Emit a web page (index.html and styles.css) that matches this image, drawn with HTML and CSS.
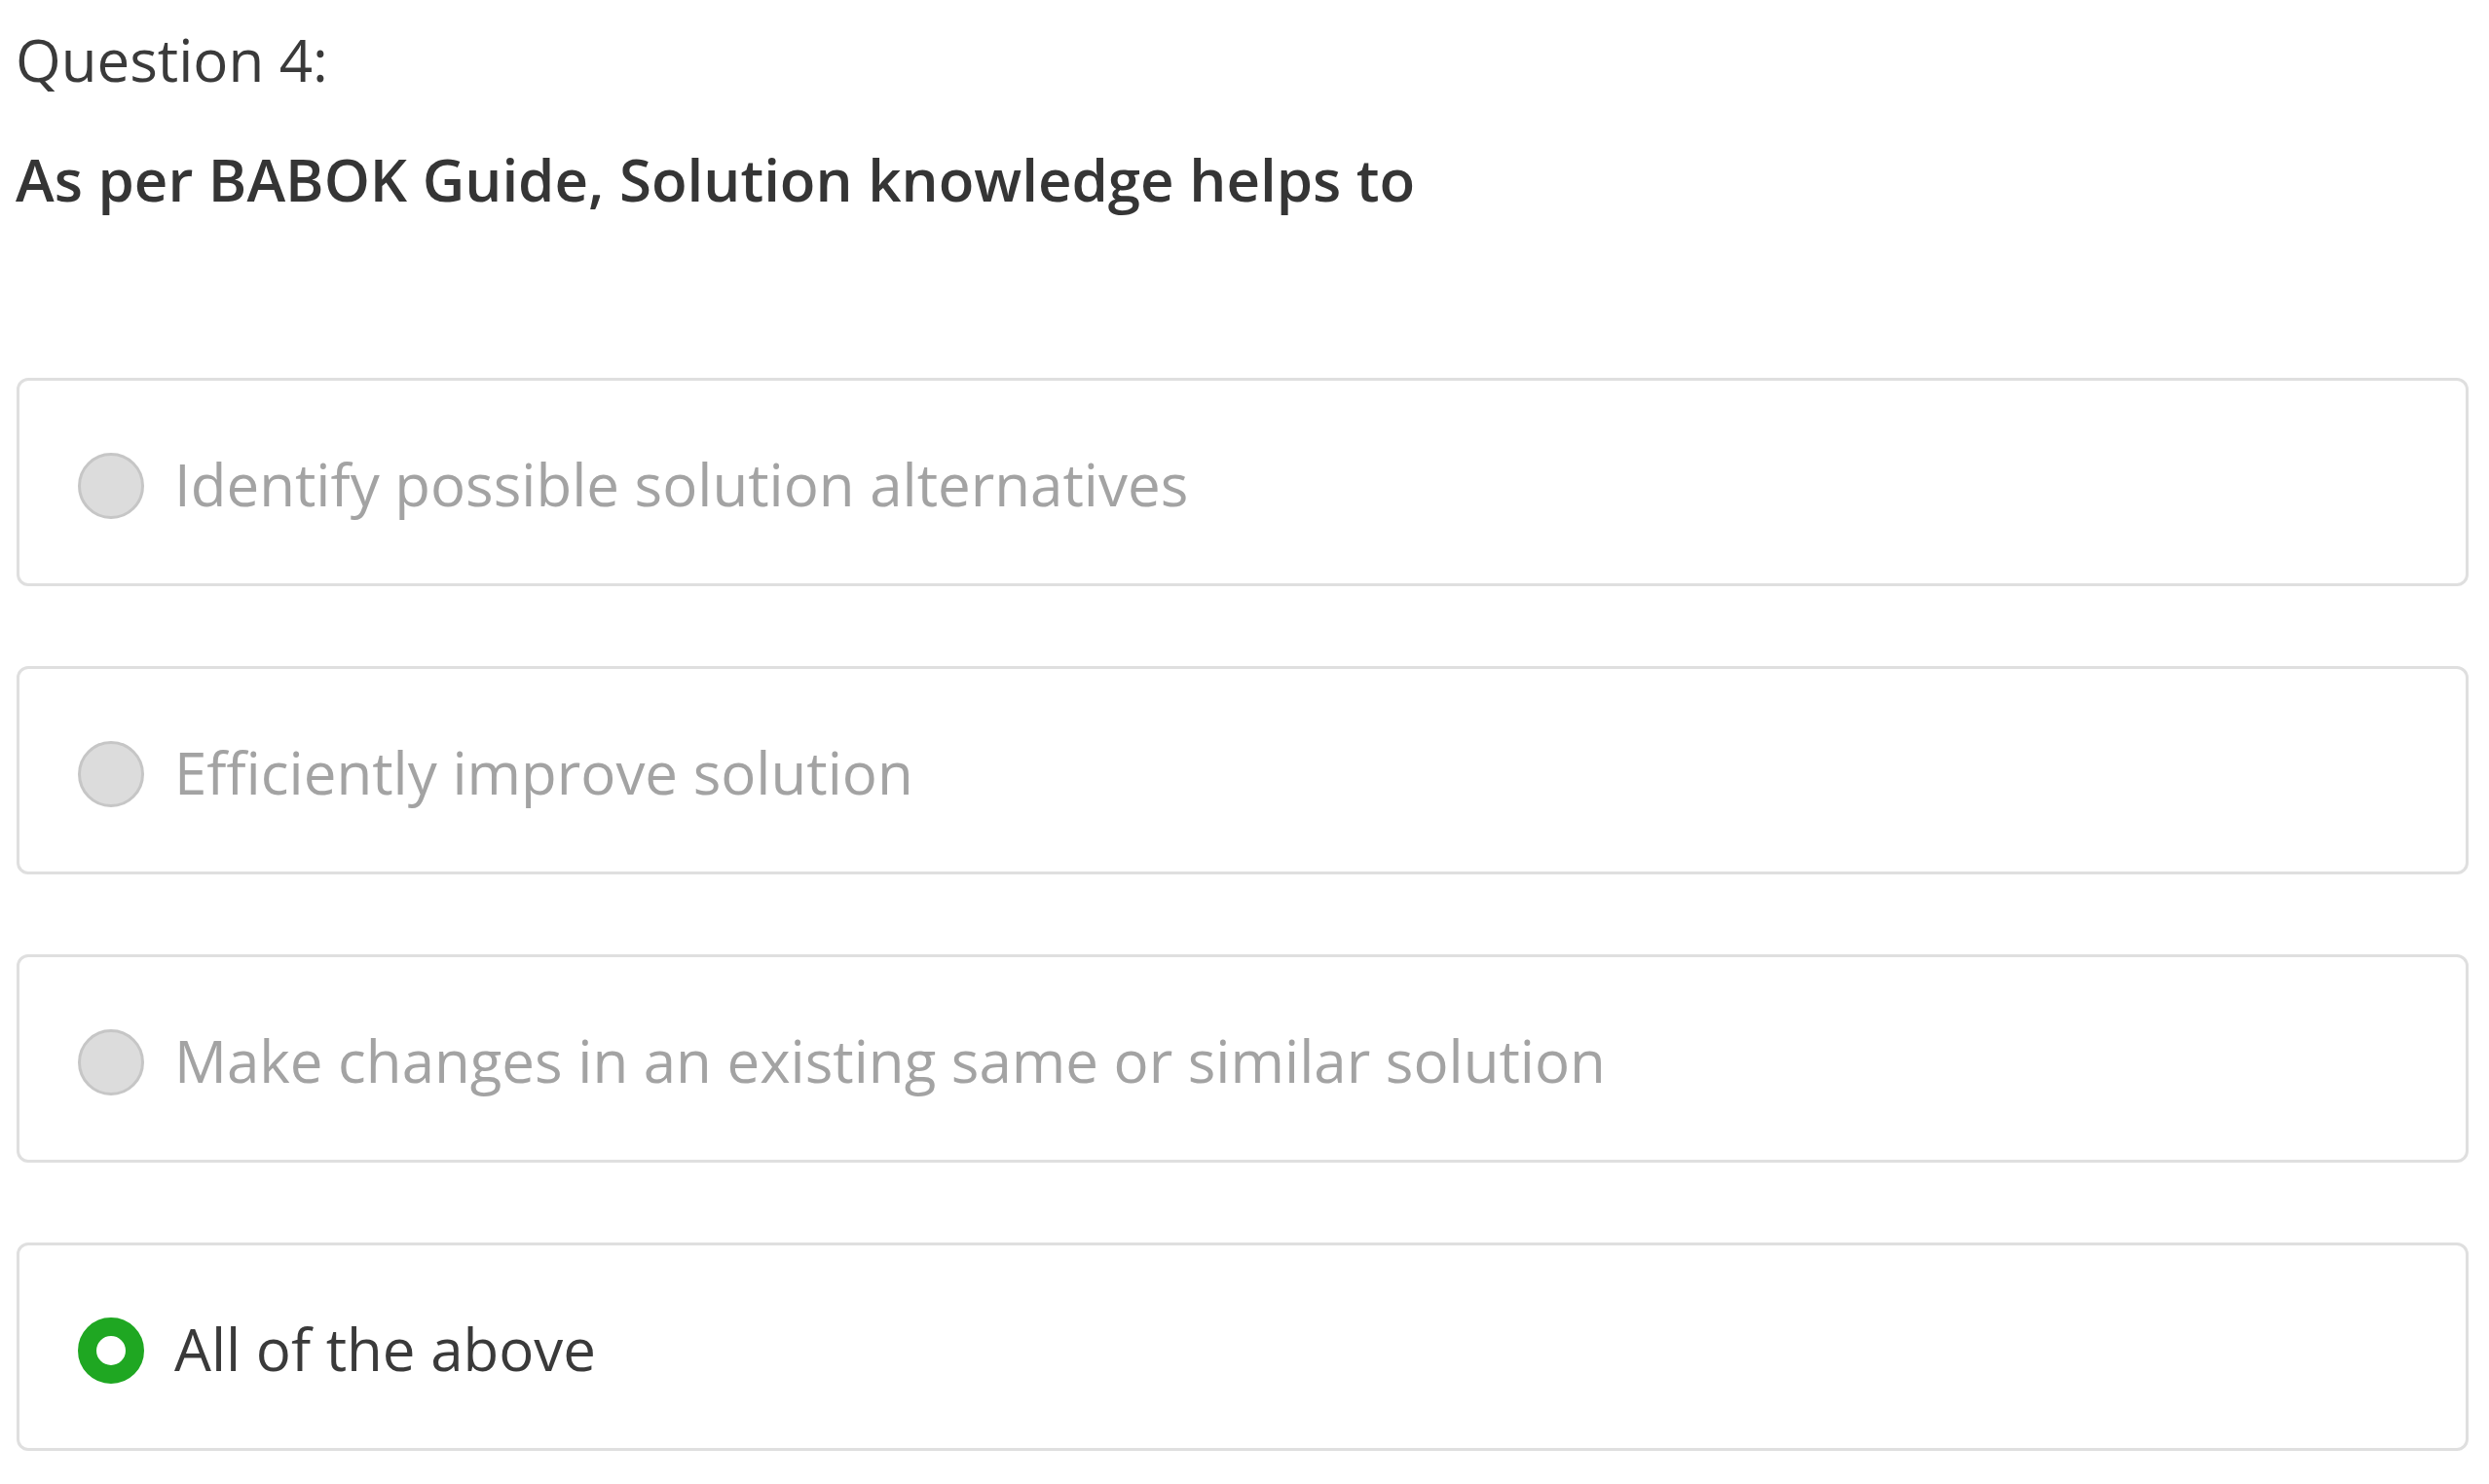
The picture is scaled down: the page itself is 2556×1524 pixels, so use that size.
FILE: index.html
```html
<!DOCTYPE html>
<html lang="en">
<head>
<meta charset="utf-8">
<title>Question 4</title>
<link rel="stylesheet" href="styles.css">
</head>
<body>
<main class="quiz">
  <div class="q-label">Question 4:</div>
  <div class="q-text">As per BABOK Guide, Solution knowledge helps to</div>
  <ul class="options">
    <li class="option">
      <span class="radio"></span>
      <span class="opt-text">Identify possible solution alternatives</span>
    </li>
    <li class="option">
      <span class="radio"></span>
      <span class="opt-text">Efficiently improve solution</span>
    </li>
    <li class="option">
      <span class="radio"></span>
      <span class="opt-text">Make changes in an existing same or similar solution</span>
    </li>
    <li class="option selected">
      <span class="radio"></span>
      <span class="opt-text">All of the above</span>
    </li>
  </ul>
</main>
</body>
</html>
```

FILE: styles.css
```css
html, body {
  margin: 0;
  padding: 0;
  background: #ffffff;
}

body {
  font-family: "Open Sans", "Liberation Sans", sans-serif;
  color: #3a3a3a;
}

.quiz {
  padding: 19px 21px 0 16px;
}

.q-label {
  font-size: 60px;
  line-height: 84px;
  font-weight: 400;
  color: #3a3a3a;
}

.q-text {
  margin-top: 39px;
  font-size: 60px;
  line-height: 84px;
  font-weight: 600;
  color: #353535;
}

.options {
  list-style: none;
  margin: 162px 0 0 1px;
  padding: 0;
  display: flex;
  flex-direction: column;
  gap: 82px;
}

.option {
  box-sizing: border-box;
  height: 214px;
  border: 3px solid #dfdfdf;
  border-radius: 12px;
  padding: 64px 60px 60px 60px;
  display: flex;
  align-items: center;
  gap: 31px;
}

.radio {
  box-sizing: border-box;
  flex: 0 0 68px;
  width: 68px;
  height: 68px;
  border-radius: 50%;
  background: #dcdcdc;
  border: 3px solid #c6c6c6;
  margin-top: 3px;
}

.opt-text {
  font-size: 60px;
  line-height: 84px;
  color: #a3a3a3;
}

.option.selected .radio {
  background: #ffffff;
  border: 19px solid #1fa722;
}

.option.selected .opt-text {
  color: #3a3a3a;
}
```
